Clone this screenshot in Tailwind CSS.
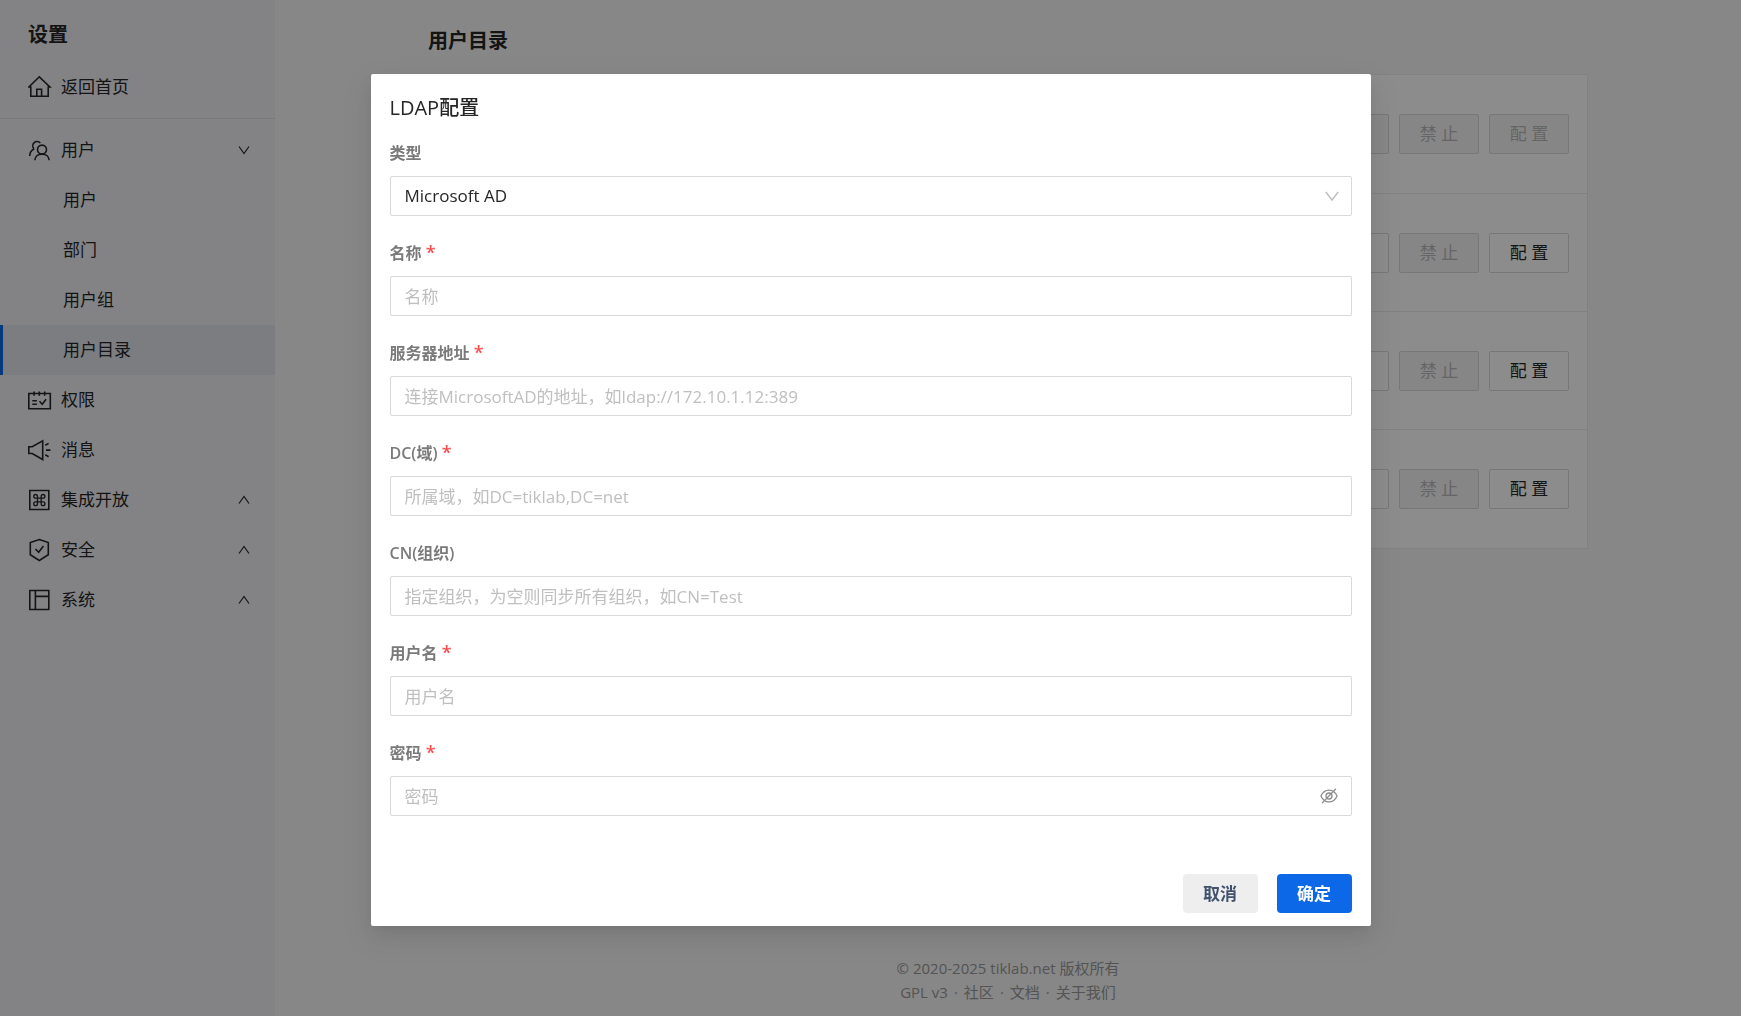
<!DOCTYPE html>
<html lang="zh-CN">
<head>
    <meta charset="UTF-8">
    <meta name="viewport" content="width=device-width, initial-scale=1.0">
    <title>用户目录 - 设置</title>
    <script src="https://cdn.jsdelivr.net/npm/@tailwindcss/browser@4"></script>
</head>
<body class="bg-[#f6f6f6] font-['Open_Sans','Noto_Sans_CJK_SC',sans-serif] text-[17px] leading-6 text-[#262626]">

    <div class="flex min-h-screen">
        <!-- 侧边栏 -->
        <aside class="w-[275px] shrink-0 bg-[#eeeff5]">
            <h2 class="px-7 pt-5 text-xl leading-[30px] font-bold">设置</h2>
            <a href="#" class="mt-3 flex h-[50px] items-center gap-[9px] px-7">
                <svg class="size-6" viewBox="0 0 24 24" fill="none" stroke="currentColor" stroke-width="1.6"><path d="M2.8 21.3V12H.9L11.3 1.8 21.9 12h-1.7v9.3zM8.8 21v-6.8h4.8V21"/></svg>
                返回首页
            </a>
            <hr class="mt-[6px] mb-[6px] border-[#dcdde2]">
            <nav>
                <button type="button" class="flex h-[50px] w-full items-center gap-[9px] pr-6 pl-7">
                    <svg class="size-6" viewBox="0 0 24 24" fill="none" stroke="currentColor" stroke-width="1.6"><circle cx="14" cy="11.6" r="4.5"/><path d="M6.8 22.3c.2-3.6 3-6.2 7.2-6.2s7 2.6 7.2 6.2M5.8 10.6A4.2 4.2 0 1 1 12.300 5M1.700 17.9c0-3.2 1.500-5.700 4.600-7.200"/></svg>
                    <span class="flex-1 text-left">用户</span>
                    <svg class="h-3 w-[14px]" viewBox="0 0 14 12" fill="none" stroke="currentColor" stroke-width="1.2"><path d="M2 2.500l5 7 5-7"/></svg>
                </button>
                <a href="#" class="flex h-[50px] items-center border-l-[3px] border-transparent pl-[60px]">用户</a>
                <a href="#" class="flex h-[50px] items-center border-l-[3px] border-transparent pl-[60px]">部门</a>
                <a href="#" class="flex h-[50px] items-center border-l-[3px] border-transparent pl-[60px]">用户组</a>
                <a href="#" class="flex h-[50px] items-center border-l-[3px] border-[#0d68e8] bg-[#e2e3ec] pl-[60px]">用户目录</a>
                <a href="#" class="flex h-[50px] items-center gap-[9px] pr-6 pl-7">
                    <svg class="size-6" viewBox="0 0 24 24" fill="none" stroke="currentColor" stroke-width="1.6"><path d="M.8 5.500h21.500v15.200H.8zM6 3.400v4.400M11.300 3.400v4.400M16.700 3.400v4.400M4.300 12.700h4.600M4.300 16.200h4.600M11.500 13.300l2.700 2.900 3.900-5"/></svg>
                    权限
                </a>
                <a href="#" class="flex h-[50px] items-center gap-[9px] pr-6 pl-7">
                    <svg class="size-6" viewBox="0 0 24 24" fill="none" stroke="currentColor" stroke-width="1.6"><path d="M.8 8.800h3.400l10.500-5.900v18.600L4.200 15.500H.8zM17.300 7.300l3.300-1.900M18 12.100h4.500M17.300 16.800l3.300 1.900"/></svg>
                    消息
                </a>
                <button type="button" class="flex h-[50px] w-full items-center gap-[9px] pr-6 pl-7">
                    <svg class="size-6" viewBox="0 0 24 24" fill="none" stroke="currentColor" stroke-width="1.6"><path d="M1.800 2.500h19v19h-19z"/><path stroke-width="2.2" transform="translate(3.900 4.600) scale(.62)" d="M18 3a3 3 0 0 0-3 3v12a3 3 0 1 0 3-3H6a3 3 0 1 0 3 3V6a3 3 0 1 0-3 3h12a3 3 0 1 0 0-6"/></svg>
                    <span class="flex-1 text-left">集成开放</span>
                    <svg class="h-3 w-[14px]" viewBox="0 0 14 12" fill="none" stroke="currentColor" stroke-width="1.2"><path d="M2 9.500l5-7 5 7"/></svg>
                </button>
                <button type="button" class="flex h-[50px] w-full items-center gap-[9px] pr-6 pl-7">
                    <svg class="size-6" viewBox="0 0 24 24" fill="none" stroke="currentColor" stroke-width="1.6"><path d="M11.300 1.500l9 3v12.200l-9 5.800-9-5.800V4.500zM7.500 11l3.200 3.300 4.700-6.300"/></svg>
                    <span class="flex-1 text-left">安全</span>
                    <svg class="h-3 w-[14px]" viewBox="0 0 14 12" fill="none" stroke="currentColor" stroke-width="1.2"><path d="M2 9.500l5-7 5 7"/></svg>
                </button>
                <button type="button" class="flex h-[50px] w-full items-center gap-[9px] pr-6 pl-7">
                    <svg class="size-6" viewBox="0 0 24 24" fill="none" stroke="currentColor" stroke-width="1.6"><path d="M1.800 2.500h19v19h-19zM7.400 2.500v19M7.400 8.400h13.400"/></svg>
                    <span class="flex-1 text-left">系统</span>
                    <svg class="h-3 w-[14px]" viewBox="0 0 14 12" fill="none" stroke="currentColor" stroke-width="1.2"><path d="M2 9.500l5-7 5 7"/></svg>
                </button>
            </nav>
        </aside>

        <!-- 用户目录列表 -->
        <main class="flex flex-1 flex-col">
            <div class="mx-auto w-full max-w-[1160px] pt-[26px]">
                <h1 class="text-xl leading-[30px] font-bold">用户目录</h1>
                <div class="mt-[18px] divide-y divide-[#ebebeb] border border-[#ebebeb] bg-white">
                    <div class="flex h-[119px] items-center justify-end gap-[10px] px-[18px]">
                        <button type="button" disabled class="h-10 w-20 rounded-xs border border-[#d9d9d9] bg-[#f5f5f5]"></button>
                        <button type="button" disabled class="h-10 w-20 rounded-xs border border-[#d9d9d9] bg-[#f5f5f5] text-[#b8b8b8]">禁 止</button>
                        <button type="button" disabled class="h-10 w-20 rounded-xs border border-[#d9d9d9] bg-[#f5f5f5] text-[#b8b8b8]">配 置</button>
                    </div>
                    <div class="flex h-[118px] items-center justify-end gap-[10px] px-[18px]">
                        <button type="button" class="h-10 w-20 rounded-xs border border-[#d9d9d9] bg-white"></button>
                        <button type="button" disabled class="h-10 w-20 rounded-xs border border-[#d9d9d9] bg-[#f5f5f5] text-[#b8b8b8]">禁 止</button>
                        <button type="button" class="h-10 w-20 rounded-xs border border-[#d9d9d9] bg-white">配 置</button>
                    </div>
                    <div class="flex h-[118px] items-center justify-end gap-[10px] px-[18px]">
                        <button type="button" class="h-10 w-20 rounded-xs border border-[#d9d9d9] bg-white"></button>
                        <button type="button" disabled class="h-10 w-20 rounded-xs border border-[#d9d9d9] bg-[#f5f5f5] text-[#b8b8b8]">禁 止</button>
                        <button type="button" class="h-10 w-20 rounded-xs border border-[#d9d9d9] bg-white">配 置</button>
                    </div>
                    <div class="flex h-[118px] items-center justify-end gap-[10px] px-[18px]">
                        <button type="button" class="h-10 w-20 rounded-xs border border-[#d9d9d9] bg-white"></button>
                        <button type="button" disabled class="h-10 w-20 rounded-xs border border-[#d9d9d9] bg-[#f5f5f5] text-[#b8b8b8]">禁 止</button>
                        <button type="button" class="h-10 w-20 rounded-xs border border-[#d9d9d9] bg-white">配 置</button>
                    </div>
                </div>
            </div>
            <footer class="mt-auto pb-3 text-center text-[15px] text-[#999]">
                <p>© 2020-2025 tiklab.net 版权所有</p>
                <p class="flex justify-center gap-[6px]"><a href="#">GPL v3</a><span>·</span><a href="#">社区</a><span>·</span><a href="#">文档</a><span>·</span><a href="#">关于我们</a></p>
            </footer>
        </main>
    </div>

    <!-- LDAP 配置弹窗 -->
    <div class="fixed inset-0 overflow-auto bg-black/45 pt-[74px] pb-6">
        <div role="dialog" aria-modal="true" aria-labelledby="ldap-title" class="mx-auto w-full max-w-[1000px] rounded-xs bg-white px-[19px] pt-5 pb-[13px] shadow-[0_4px_8px_-5px_rgba(0,0,0,0.12),0_8px_20px_rgba(0,0,0,0.08),0_11px_35px_10px_rgba(0,0,0,0.05)]">
            <h3 id="ldap-title" class="mb-[19px] text-xl leading-7 font-medium">LDAP配置</h3>
            <form class="flex flex-col gap-[25px]">
                <div>
                    <label for="type" class="mb-[11px] block text-base font-semibold text-[#7a7a7a]">类型</label>
                    <div class="relative">
                        <select id="type" class="block h-10 w-full appearance-none rounded-xs border border-[#d9d9d9] bg-white px-[14px]">
                            <option>Microsoft AD</option>
                        </select>
                        <svg class="pointer-events-none absolute top-3 right-3 size-4" viewBox="0 0 16 16" fill="none" stroke="#bfbfbf" stroke-width="1.5"><path d="M1.800 4l6.200 8 6.200-8"/></svg>
                    </div>
                </div>
                <div>
                    <label for="name" class="mb-[11px] block text-base font-semibold text-[#7a7a7a]">名称 <span class="text-lg leading-none text-[#ff4d4f]">*</span></label>
                    <input id="name" type="text" placeholder="名称" class="block h-10 w-full rounded-xs border border-[#d9d9d9] px-[14px] placeholder:text-[#bfbfbf]">
                </div>
                <div>
                    <label for="server" class="mb-[11px] block text-base font-semibold text-[#7a7a7a]">服务器地址 <span class="text-lg leading-none text-[#ff4d4f]">*</span></label>
                    <input id="server" type="text" placeholder="连接MicrosoftAD的地址，如ldap://172.10.1.12:389" class="block h-10 w-full rounded-xs border border-[#d9d9d9] px-[14px] placeholder:text-[#bfbfbf]">
                </div>
                <div>
                    <label for="dc" class="mb-[11px] block text-base font-semibold text-[#7a7a7a]">DC(域) <span class="text-lg leading-none text-[#ff4d4f]">*</span></label>
                    <input id="dc" type="text" placeholder="所属域，如DC=tiklab,DC=net" class="block h-10 w-full rounded-xs border border-[#d9d9d9] px-[14px] placeholder:text-[#bfbfbf]">
                </div>
                <div>
                    <label for="cn" class="mb-[11px] block text-base font-semibold text-[#7a7a7a]">CN(组织)</label>
                    <input id="cn" type="text" placeholder="指定组织，为空则同步所有组织，如CN=Test" class="block h-10 w-full rounded-xs border border-[#d9d9d9] px-[14px] placeholder:text-[#bfbfbf]">
                </div>
                <div>
                    <label for="username" class="mb-[11px] block text-base font-semibold text-[#7a7a7a]">用户名 <span class="text-lg leading-none text-[#ff4d4f]">*</span></label>
                    <input id="username" type="text" placeholder="用户名" class="block h-10 w-full rounded-xs border border-[#d9d9d9] px-[14px] placeholder:text-[#bfbfbf]">
                </div>
                <div>
                    <label for="password" class="mb-[11px] block text-base font-semibold text-[#7a7a7a]">密码 <span class="text-lg leading-none text-[#ff4d4f]">*</span></label>
                    <div class="relative">
                        <input id="password" type="password" placeholder="密码" class="block h-10 w-full rounded-xs border border-[#d9d9d9] pr-10 pl-[14px] placeholder:text-[#bfbfbf]">
                        <button type="button" aria-label="显示密码" class="absolute top-[11px] right-[14px]">
                            <svg class="size-[18px]" viewBox="0 0 18 18" fill="none" stroke="#8c8c8c" stroke-width="1.3"><path d="M.9 9C2.800 5 5.600 3.100 9 3.100S15.200 5 17.100 9c-1.900 4-4.700 5.900-8.100 5.900S2.800 13 .9 9zM2 16.100L15.900 1.800"/><circle cx="9" cy="9" r="3"/></svg>
                        </button>
                    </div>
                </div>
                <div class="mt-[33px] flex justify-end gap-[19px]">
                    <button type="button" class="h-[39px] w-[75px] rounded-sm bg-[#eee] font-bold text-[#42526e]">取消</button>
                    <button type="submit" class="h-[39px] w-[75px] rounded-sm bg-[#0d68e8] font-bold text-white">确定</button>
                </div>
            </form>
        </div>
    </div>

</body>
</html>
